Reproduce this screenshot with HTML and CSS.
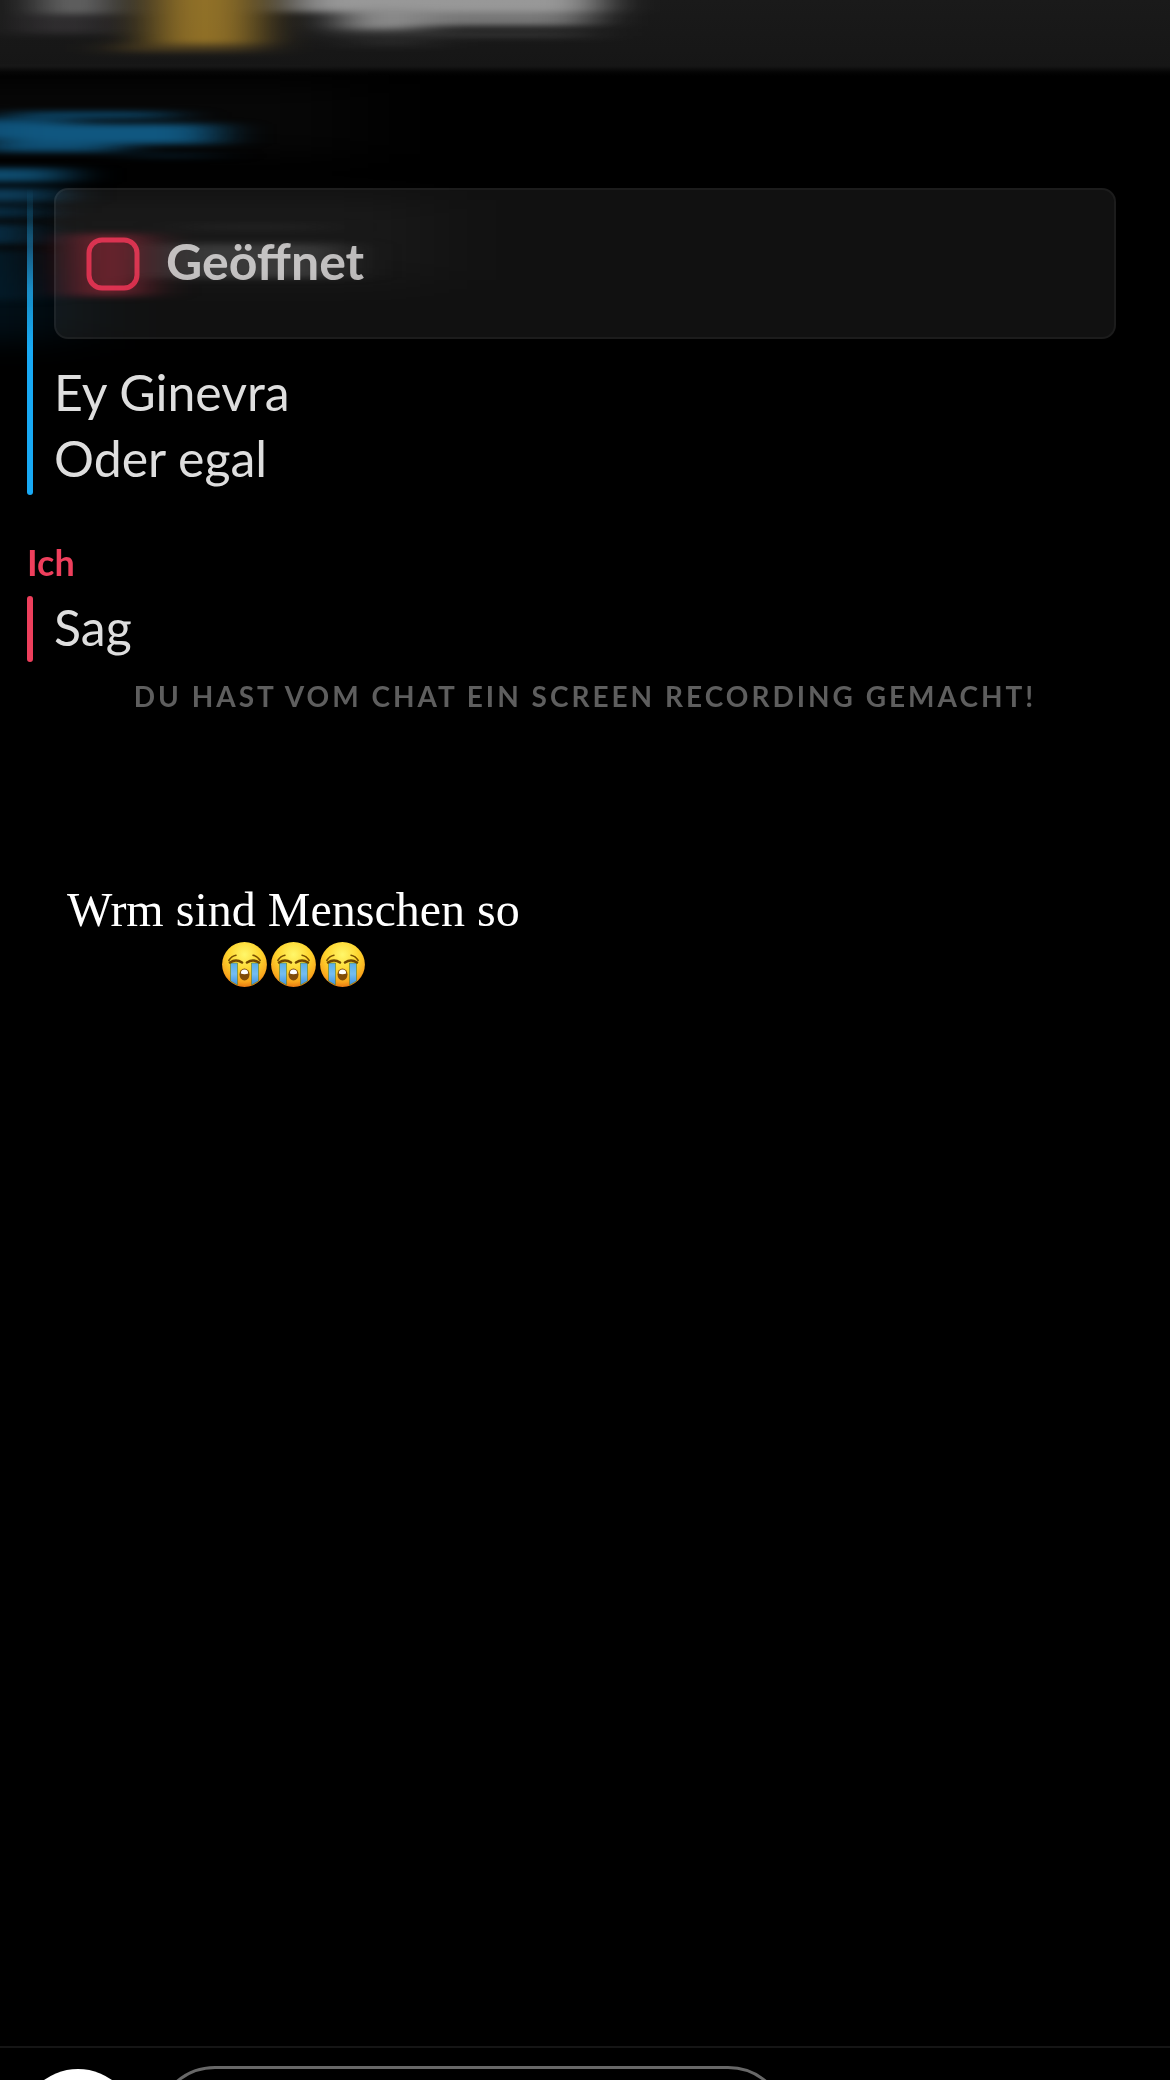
FILE: index.html
```html
<!DOCTYPE html>
<html lang="de">
<head>
    <meta charset="UTF-8">
    <meta name="viewport" content="width=device-width, initial-scale=1.0">
    <title>Chat</title>
    <link rel="stylesheet" href="styles.css">
</head>
<body>
    <header class="topbar"></header>

    <main class="chat">
        <section class="message message-other">
            <div class="snap-card">
                <svg class="snap-icon" viewBox="0 0 54 54" aria-hidden="true">
                    <rect x="3" y="3" width="48" height="48" rx="13" fill="none" stroke="#c9243c" stroke-width="5"/>
                </svg>
                <span class="snap-status">Geöffnet</span>
            </div>
            <p>Ey Ginevra</p>
            <p>Oder egal</p>
        </section>

        <h2 class="sender">Ich</h2>
        <section class="message message-me">
            <p>Sag</p>
        </section>

        <p class="notice">DU HAST VOM CHAT EIN SCREEN RECORDING GEMACHT!</p>

        <div class="caption">
            <p>Wrm sind Menschen so</p>
            <div class="emojis" role="img" aria-label="😭😭😭">
                <svg viewBox="0 0 45 45"><use href="#sob"/></svg>
                <svg viewBox="0 0 45 45"><use href="#sob"/></svg>
                <svg viewBox="0 0 45 45"><use href="#sob"/></svg>
            </div>
        </div>
    </main>

    <footer class="composer">
        <button class="camera" type="button" aria-label="Kamera"></button>
        <input class="chat-input" type="text" aria-label="Chat senden">
    </footer>

    <!-- Motion blur of the header -->
    <svg class="smear" viewBox="0 0 700 420" aria-hidden="true">
        <defs>
            <filter id="soft" filterUnits="userSpaceOnUse" x="-150" y="-60" width="1000" height="540" color-interpolation-filters="sRGB"><feGaussianBlur stdDeviation="26 3"/></filter>
            <filter id="haze" filterUnits="userSpaceOnUse" x="-250" y="-60" width="1100" height="540" color-interpolation-filters="sRGB"><feGaussianBlur stdDeviation="50 14"/></filter>
        </defs>
        <g filter="url(#haze)">
            <rect x="-150" y="270" width="210" height="70" fill="#02111a"/>
            <rect x="0" y="200" width="420" height="80" fill="#090909"/>
            <rect x="-150" y="84" width="500" height="70" fill="#070707"/>
        </g>
        <g filter="url(#soft)">
            <rect x="40" y="-10" width="70" height="24" fill="#5a5a5a"/>
            <rect x="20" y="14" width="90" height="20" fill="#1a181a"/>
            <rect x="290" y="-10" width="310" height="22" fill="#8c8c8c"/>
            <rect x="340" y="8" width="80" height="22" fill="#808080"/>
            <rect x="420" y="12" width="170" height="14" fill="#686868"/>
            <rect x="330" y="32" width="260" height="5" fill="#252525"/>
            <rect x="350" y="40" width="80" height="6" fill="#161616"/>
            <rect x="152" y="-10" width="106" height="54" fill="#866210"/>
            <rect x="120" y="44" width="140" height="8" fill="#382808"/>
        </g>
        <g filter="url(#soft)">
            <rect x="10" y="112" width="160" height="6" fill="#0c4d73"/>
            <rect x="-80" y="119" width="150" height="20" fill="#0d4b70"/>
            <rect x="0" y="124" width="215" height="20" fill="#105780"/>
            <rect x="-20" y="142" width="140" height="10" fill="#0e4d72"/>
            <rect x="130" y="154" width="80" height="3" fill="#06273b"/>
            <rect x="-80" y="168" width="145" height="14" fill="#0e4a6c"/>
            <rect x="-80" y="188" width="135" height="14" fill="#0d3b57"/>
            <rect x="-80" y="206" width="120" height="12" fill="#082c42"/>
            <rect x="-80" y="224" width="110" height="20" fill="#082e45"/>
            <rect x="-80" y="250" width="105" height="50" fill="#041c2a"/>
            <rect x="76" y="234" width="64" height="62" fill="#6d1522"/>
            <rect x="160" y="244" width="180" height="34" fill="#2c2c2c"/>
            <rect x="190" y="225" width="130" height="4" fill="#161616"/>
        </g>
    </svg>

    <svg class="sprite" aria-hidden="true">
        <defs>
            <radialGradient id="face" cx="50%" cy="28%" r="72%">
                <stop offset="0" stop-color="#fff76a"/>
                <stop offset=".5" stop-color="#fed52e"/>
                <stop offset=".85" stop-color="#f9a51c"/>
                <stop offset="1" stop-color="#e87911"/>
            </radialGradient>
            <linearGradient id="tear" x1="0" y1="0" x2="0" y2="1">
                <stop offset="0" stop-color="#5aaee8"/>
                <stop offset=".5" stop-color="#74bdf0"/>
                <stop offset="1" stop-color="#3f91e4"/>
            </linearGradient>
            <symbol id="sob" viewBox="0 0 45 45">
                <circle cx="22.5" cy="22.5" r="22.4" fill="url(#face)"/>
                <path d="M8.500 21h7v22l-7-4zM29.500 21h7v18l-7 4z" fill="url(#tear)" stroke="#62821f" stroke-width=".6"/>
                <path d="M8 20.500q6-4 12 0M25 20.500q6-4 12 0" fill="none" stroke="#714800" stroke-width="2.600" stroke-linecap="round"/>
                <path d="M6.800 18.500q2.700-4.500 7.200-5.300M38.200 18.500q-2.700-4.500-7.200-5.300" fill="none" stroke="#795000" stroke-width="1.500" stroke-linecap="round"/>
                <ellipse cx="22.500" cy="32.500" rx="5" ry="6" fill="#804b08"/>
                <path d="M18.800 31.500q0-4 3.700-4t3.700 4q-3.700 1.300-7.400 0z" fill="#fff"/>
            </symbol>
        </defs>
    </svg>
</body>
</html>
```

FILE: styles.css
```css
:root {
    --blue: #18a9f5;
    --red: #ee3f5c;
    --text: #dedede;
}

* {
    box-sizing: border-box;
}

body {
    position: relative;
    display: flex;
    flex-direction: column;
    min-height: 100vh;
    margin: 0;
    background: #000;
    color: var(--text);
    font-family: Lato, "Liberation Sans", sans-serif;
    overflow-x: hidden;
}

p,
h2 {
    margin: 0;
}

.topbar {
    height: 76px;
    background: linear-gradient(#1a1a1a, #161616 66px, #050505 72px, #000);
}

.chat {
    flex: 1;
    padding: 112px 27px 0;
}

.message {
    position: relative;
    padding: 0 0 4px 27px;
    font-size: 50px;
    line-height: 66px;
}

/* Vertical line beside each message */
.message::before {
    content: "";
    position: absolute;
    left: 0;
    top: 0;
    bottom: 0;
    width: 6px;
    border-radius: 3px;
    background: var(--red);
}

.message-other::before {
    background: linear-gradient(transparent, #1482bd 100px, var(--blue) 160px);
}

.message-me p {
    line-height: 62px;
}

.snap-card {
    display: flex;
    align-items: center;
    gap: 26px;
    height: 151px;
    margin: 0 27px 20px 0;
    padding: 0 30px;
    border: 2px solid #1c1c1c;
    border-radius: 14px;
    background: #111;
}

.snap-icon {
    width: 54px;
    height: 54px;
}

.snap-status {
    padding-bottom: 6px;
    color: #b8b6b6;
    font-weight: 700;
}

.sender {
    margin-top: 45px;
    color: var(--red);
    font-size: 36px;
    font-weight: 700;
    line-height: 44px;
    padding-bottom: 12px;
}

.notice {
    margin-top: 14px;
    color: #5e5e5e;
    font-size: 28px;
    font-weight: 700;
    letter-spacing: 3px;
    line-height: 40px;
    text-align: center;
}

.caption {
    display: inline-block;
    margin: 164px 0 0 40px;
    color: #fff;
    font-family: "Liberation Serif", serif;
    font-size: 48px;
    line-height: 60px;
    text-align: center;
}

.emojis {
    display: flex;
    justify-content: center;
    gap: 4px;
    margin-top: 2px;
}

.emojis svg {
    width: 45px;
    height: 45px;
}

.composer {
    display: flex;
    gap: 19px;
    height: 34px;
    padding: 18px 20px 0;
    border-top: 2px solid #151515;
    overflow: hidden;
}

.camera {
    flex: none;
    width: 116px;
    height: 116px;
    margin-top: 3px;
    padding: 0;
    border: 0;
    border-radius: 50%;
    background: #fff;
}

.chat-input {
    width: 56%;
    height: 120px;
    padding: 0 40px;
    border: 3px solid #686868;
    border-radius: 60px;
    background: transparent;
    color: var(--text);
    font: inherit;
}

.smear {
    position: absolute;
    top: 0;
    left: 0;
    width: 700px;
    height: 420px;
    mix-blend-mode: screen;
    pointer-events: none;
}

.sprite {
    position: absolute;
    width: 0;
    height: 0;
}
```
